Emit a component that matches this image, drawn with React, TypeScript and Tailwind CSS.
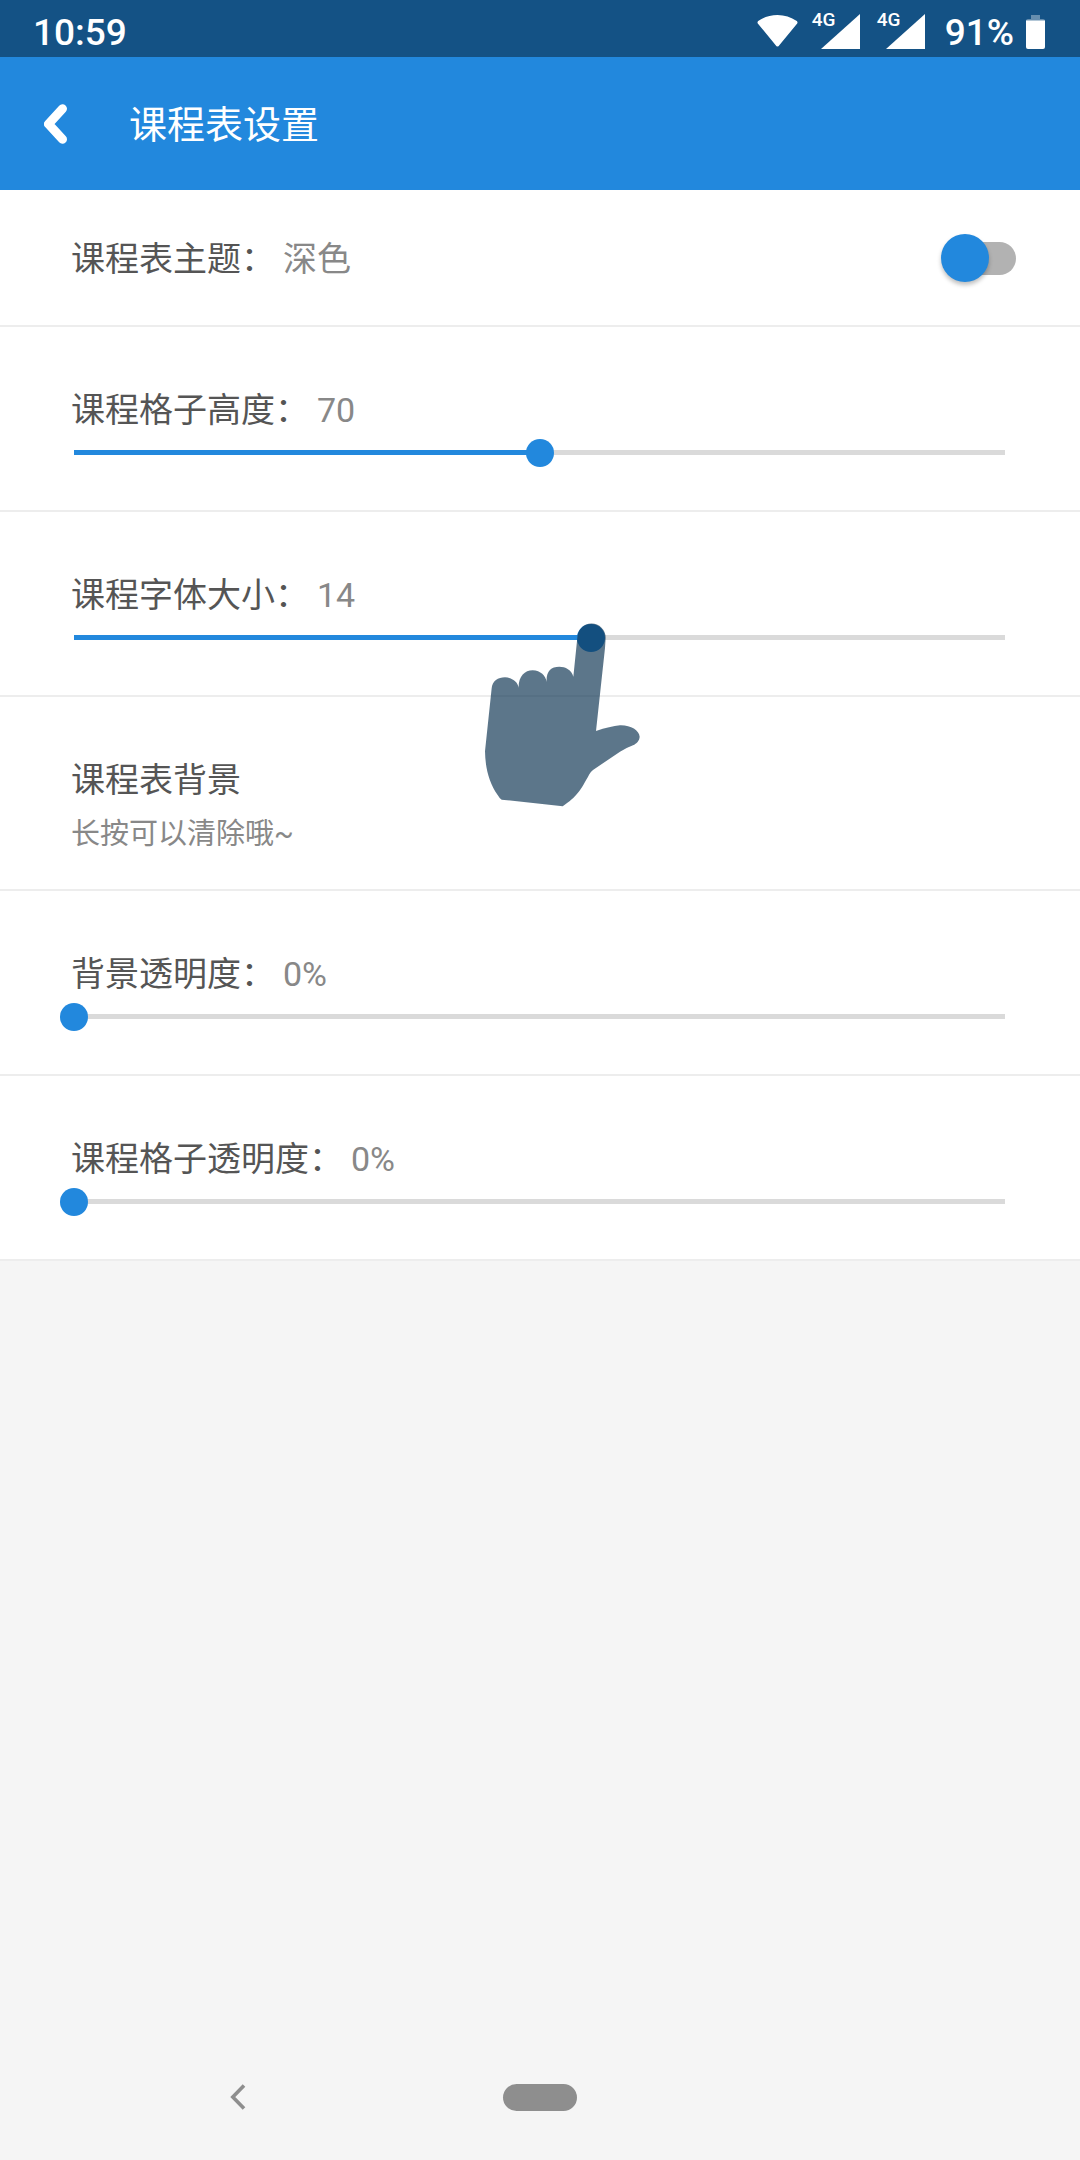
import { useId, useState, type CSSProperties, type ReactNode } from "react";

function Signal() {
  return (
    <div className="relative h-9 w-12">
      <span className="absolute left-0 top-0 text-[19px] leading-[14px] font-medium">4G</span>
      <svg className="ml-auto h-9 w-[39px]" viewBox="0 0 39 36" aria-hidden="true">
        <path d="M39 1V36H0Z" fill="currentColor" />
      </svg>
    </div>
  );
}

function StatusBar() {
  return (
    <div className="flex h-[57px] items-center justify-between bg-[#145285] pr-[35px] pl-[33px] pt-2 text-white">
      <time className="text-[37px] leading-[44px] font-medium">10:59</time>
      <div className="flex items-center">
        <div className="mr-5 flex pb-1">
          <svg className="mr-[14px] h-9 w-[41px]" viewBox="0 0 41 36" aria-hidden="true">
            <path d="M20.5 33.5Q19.5 33.5 18.5 32L.8 10.5Q0 9 1.2 8Q10 2 20.5 2T39.8 8Q41 9 40.2 10.5L22.5 32Q21.5 33.5 20.5 33.5Z" fill="currentColor" />
          </svg>
          <div className="flex gap-[17px]">
            <Signal />
            <Signal />
          </div>
        </div>
        <span className="mr-3 text-[37px] leading-[44px] font-medium">91%</span>
        <svg className="mb-1 h-9 w-[19px]" viewBox="0 0 19 36" aria-hidden="true">
          <path d="M5 2h9v4h3q2 0 2 2H0q0-2 2-2h3z" fill="#fff" opacity=".35" />
          <path d="M0 7.5h19V34q0 2-2 2H2q-2 0-2-2z" fill="currentColor" />
        </svg>
      </div>
    </div>
  );
}

function Header() {
  return (
    <header className="flex h-[133px] items-center bg-[#2288dd] pl-[44px] text-white">
      <button type="button" aria-label="返回" className="mr-[62px]">
        <svg className="h-10 w-[23px]" viewBox="0 0 23 40" aria-hidden="true">
          <path d="M18.5 4.7L4.5 20L18.5 35.3" fill="none" stroke="currentColor" strokeWidth="9" strokeLinecap="round" strokeLinejoin="round" />
        </svg>
      </button>
      <h1 className="pt-0.5 text-[38px] leading-[48px] font-normal">课程表设置</h1>
    </header>
  );
}

function Hand() {
  return (
    <svg
      className="pointer-events-none absolute -top-3 left-(--at) z-10 ml-[-106px] h-[184px] w-[155px]"
      viewBox="75 70 465 552"
      aria-hidden="true"
    >
      <path
        d="M352 114A42 42 0 0 1 437 114L435 145L408 394Q450 380 480 377C512 376 537 392 539 411C538 424 530 431 519 437Q496 446 480 456L399 511Q392 516 388 524C362 572 350 592 308 620L125 600Q119 597 113 586C88 550 76 508 75 455L95 266C97 244 114 233 135 233C158 234 174 248 176 264C175 231 194 212 218 212C242 213 257 228 260 247C258 216 272 201 298 201C316 201 335 210 340 231Z"
        fill="#0c3350"
        fillOpacity=".67"
      />
    </svg>
  );
}

interface SliderRowProps {
  label: string;
  min: number;
  max: number;
  initial: number;
  unit?: string;
  pointer?: boolean;
}

function SliderRow({ label, min, max, initial, unit = "", pointer }: SliderRowProps) {
  const id = useId();
  const [value, setValue] = useState(initial);
  const percent = `${((value - min) / (max - min)) * 100}%`;
  return (
    <Row className="pt-[59px] pr-[61px] pb-[43px] pl-[60px]">
      <div className="flex gap-2 pl-[11px] text-[34px] leading-[48px]">
        <label htmlFor={id}>{label}：</label>
        <output htmlFor={id} className="text-[#888]">{value}{unit}</output>
      </div>
      <div className="relative mt-[5px] h-7 px-[14px] pt-[11px]">
        <div className="relative h-[5px] w-full bg-[#dadada]" style={{ "--at": percent } as CSSProperties}>
          <div className="h-full w-(--at) bg-[#2288dd]" />
          {pointer && <Hand />}
        </div>
        <input
          id={id}
          type="range"
          min={min}
          max={max}
          value={value}
          onChange={(e) => setValue(Number(e.target.value))}
          className="absolute inset-0 h-7 w-full cursor-pointer appearance-none bg-transparent [&::-webkit-slider-thumb]:h-7 [&::-webkit-slider-thumb]:w-7 [&::-webkit-slider-thumb]:appearance-none [&::-webkit-slider-thumb]:rounded-full [&::-webkit-slider-thumb]:bg-[#2288dd]"
        />
      </div>
    </Row>
  );
}

function Row({ children, className = "" }: { children: ReactNode; className?: string }) {
  return <section className={`border-b-2 border-[#ededed] ${className}`}>{children}</section>;
}

export default function App() {
  return (
    <div className="flex min-h-screen flex-col bg-[#f5f5f5] font-[Roboto,'Noto_Sans_CJK_SC',sans-serif] text-[#555]" lang="zh-CN">
      <StatusBar />
      <Header />
      <main className="flex-1">
        <div className="bg-white">
          <Row className="flex h-[137px] items-center justify-between pt-0.5 pr-[64px] pl-[71px]">
            <label htmlFor="theme" className="flex gap-2 text-[34px] leading-[48px]">
              课程表主题：<span className="text-[#888]">深色</span>
            </label>
            <input
              id="theme"
              type="checkbox"
              role="switch"
              className="relative h-[33px] w-[70px] cursor-pointer appearance-none rounded-full bg-[#b2b2b2] before:absolute before:-top-2 before:-left-[5px] before:size-12 before:rounded-full before:bg-[#2288dd] before:shadow-[0_3px_4px_rgba(0,0,0,0.25)] checked:before:left-[27px]"
            />
          </Row>
          <SliderRow label="课程格子高度" min={40} max={100} initial={70} />
          <SliderRow label="课程字体大小" min={9} max={18} initial={14} pointer />
          <Row>
            <button type="button" className="block w-full px-[71px] pt-[59px] pb-[33px] text-left">
              <span className="block text-[34px] leading-[48px]">课程表背景</span>
              <span className="mt-2 block text-[29px] leading-[44px] text-[#888]">长按可以清除哦~</span>
            </button>
          </Row>
          <SliderRow label="背景透明度" min={0} max={100} initial={0} unit="%" />
          <SliderRow label="课程格子透明度" min={0} max={100} initial={0} unit="%" />
        </div>
      </main>
      <nav className="grid h-[126px] grid-cols-3 items-center justify-items-center px-[87px] text-[#8e8e8e]">
        <button type="button" aria-label="后退">
          <svg className="h-[26px] w-4" viewBox="0 0 16 26" aria-hidden="true">
            <path d="M14 1.5L2.8 13L14 24.5" fill="none" stroke="currentColor" strokeWidth="3.6" />
          </svg>
        </button>
        <button type="button" aria-label="主屏幕" className="h-[27px] w-[74px] rounded-full bg-[#8e8e8e]" />
      </nav>
    </div>
  );
}
